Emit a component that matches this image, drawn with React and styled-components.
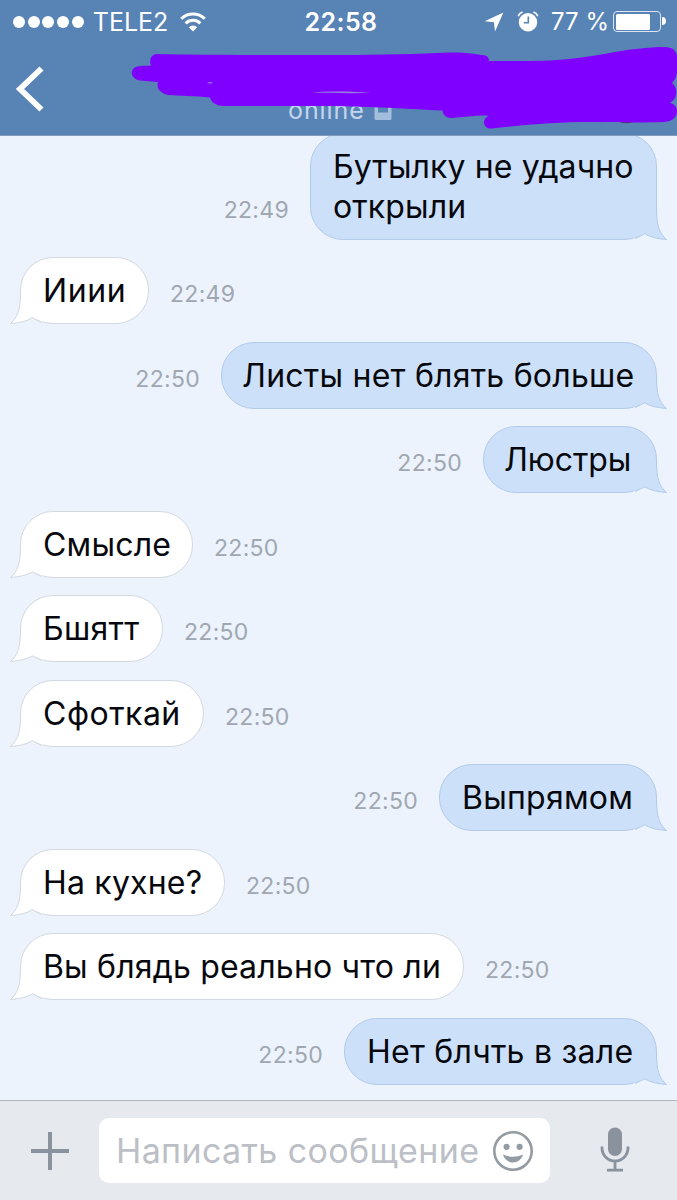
import React from 'react'
import styled, { createGlobalStyle } from 'styled-components';

const messages = [
  { id: 1, out: true, text: ['Бутылку не удачно', 'открыли'], time: '22:49', width: 347, spacing: 0.12 },
  { id: 2, out: false, text: ['Ииии'], time: '22:49', width: 129, spacing: 0.6 },
  { id: 3, out: true, text: ['Листы нет блять больше'], time: '22:50', width: 436, spacing: 0.23, indent: -2 },
  { id: 4, out: true, text: ['Люстры'], time: '22:50', width: 174, spacing: -0.1, indent: -2 },
  { id: 5, out: false, text: ['Смысле'], time: '22:50', width: 173, spacing: 0.2 },
  { id: 6, out: false, text: ['Бшятт'], time: '22:50', width: 143, spacing: 0.25 },
  { id: 7, out: false, text: ['Сфоткай'], time: '22:50', width: 184, spacing: 0.5 },
  { id: 8, out: true, text: ['Выпрямом'], time: '22:50', width: 218, spacing: 0.25 },
  { id: 9, out: false, text: ['На кухне?'], time: '22:50', width: 205, spacing: 0.2 },
  { id: 10, out: false, text: ['Вы блядь реально что ли'], time: '22:50', width: 444, spacing: 0.18 },
  { id: 11, out: true, text: ['Нет блчть в зале'], time: '22:50', width: 313, spacing: 0.25 },
]

function StatusBar() {
  return (
    <Status>
      <Carrier>
        <Dots>
          <i /><i /><i /><i /><i />
        </Dots>
        <span>TELE2</span>
        <svg width="26" height="20" viewBox="0 0 26 20" fill="none" stroke="#fff" strokeWidth="3">
          <path d="M1.2 6.8a16.7 16.7 0 0 1 23.6 0" />
          <path d="M5.6 11.4a10.5 10.5 0 0 1 14.8 0" />
          <path d="M13 19.6l-4.2-4.4a6 6 0 0 1 8.4 0z" fill="#fff" stroke="none" />
        </svg>
      </Carrier>
      <Clock>22:58</Clock>
      <Power>
        <svg width="20" height="20" viewBox="0 0 20 20">
          <path d="M19.4.4L11 19.6l-1-9.4L.6 9.2z" fill="#fff" />
        </svg>
        <Alarm width="22" height="21" viewBox="0 0 22 21">
          <circle cx="11" cy="11.3" r="9.2" fill="#fff" />
          <path d="M1.2 5.2A7 7 0 0 1 5.6 1M20.8 5.2A7 7 0 0 0 16.4 1" stroke="#fff" strokeWidth="1.8" fill="none" />
          <path d="M11.3 5.4v6.4H6.8" stroke="#5783b5" strokeWidth="1.6" fill="none" />
        </Alarm>
        <span>77 %</span>
        <Battery><Charge /></Battery>
      </Power>
    </Status>
  )
}

function Header() {
  return (
    <Top>
      <StatusBar />
      <NavBar>
        <svg width="30" height="46" viewBox="0 0 30 46">
          <path d="M26.500 2.500L5 23l21.500 20.500" fill="none" stroke="#fff" strokeWidth="5.800" />
        </svg>
        <Online>
          <span>online</span>
          <svg width="18" height="26" viewBox="0 0 18 26">
            <path fillRule="evenodd" d="M2 0h14a1.500 1.500 0 0 1 1.500 1.500v23a1.500 1.500 0 0 1-1.500 1.500H2A1.500 1.500 0 0 1 .5 24.500v-23A1.500 1.500 0 0 1 2 0zM4 3v15.500h10V3z" fill="#a3bedd" />
          </svg>
        </Online>
      </NavBar>
      <Scribble width="677" height="135" viewBox="0 0 677 135">
        <path d="M616 121q13 5 24-1z" fill="#4b3a54" />
        <path
          fill="#7f00ff"
          d="M156 54C200 55 260 55 337 55C380 55 420 54 448 52.500C466 52 474 54 482 55C487 55.500 489 57 489 61L530 61C560 61 580 58 604 54C630 49 650 47 664 47C673 47 677 51 677 57V70C677 76 675 80 672 83C676 86 677 91 676 95C675 99 673 101 670 102.500C674 104 677 107 677 111C677 118 671 122 663 122C640 123 610 122 590 122C560 122 520 125 492 128.500C487 129 484 126 484 122C484 119 486 117 489 115.500C475 115 465 117 452 118C446 118 443 115 442.500 110.500C410 109 380 107 337 106H222C215 105 211 102 210 97.500C195 96 180 96 168 95C160 93 156 88 158 82L140 80.500C131 79 129 70 136 67C141 65 146 66 151 65.500C149 60 151 55 156 54Z"
        />
        <path d="M312 92.500C330 90.800 350 91.500 371 92.800C350 93.600 330 92.800 312 92.500ZM207 83q3-1.800 6 0q-3 .8-6 0z" fill="#9a7fe0" />
      </Scribble>
    </Top>
  )
}

function Tail({ out }) {
  return (
    <TailSvg $out={out} width="36" height="36" viewBox="0 0 36 36">
      <path d="M11.500 3C11.500 20 9 28 1.500 34.500C10 33.800 17 32.500 23.500 28.800L34 33V3z" fill={out ? '#cde0f9' : '#fff'} />
      <path d="M11.500 3C11.500 20 9 28 1.500 34.500C10 33.800 17 32.500 23.500 28.800Q28 31.500 33 33.500" fill="none" stroke={out ? '#b3cbea' : '#d4d8df'} strokeWidth="1" />
    </TailSvg>
  )
}

function Message({ item }) {
  return (
    <Row $out={item.out}>
      <Bubble $out={item.out} $width={item.width}>
        <Tail out={item.out} />
        {item.text.map(line => <Line key={line} $spacing={item.spacing} $indent={item.indent || 0}>{line}</Line>)}
      </Bubble>
      <Time>{item.time}</Time>
    </Row>
  )
}

function Composer() {
  return (
    <Bar>
      <Plus width="38" height="38" viewBox="0 0 38 38">
        <path d="M19 0v38M0 19h38" stroke="#89929d" strokeWidth="4" />
      </Plus>
      <Field>
        <Placeholder>Написать сообщение</Placeholder>
        <svg width="40" height="40" viewBox="0 0 40 40">
          <circle cx="20" cy="20" r="18.700" fill="none" stroke="#949ba3" strokeWidth="2.600" />
          <circle cx="13.600" cy="15.800" r="3.100" fill="#949ba3" />
          <circle cx="26.600" cy="15.800" r="3.100" fill="#949ba3" />
          <path d="M9.800 23.600Q20 28 30.200 23.600C28 29.500 24 31.500 20 31.500S12 29.500 9.800 23.600z" fill="#949ba3" />
        </svg>
      </Field>
      <Mic width="30" height="46" viewBox="0 0 30 46">
        <rect x="8" y="0.500" width="14" height="28.500" rx="7" fill="#89929d" />
        <path d="M2 19.500v1.500a13 13 0 0 0 26 0v-1.500M15 34v9M7 43.200h16" fill="none" stroke="#89929d" strokeWidth="2.800" />
      </Mic>
    </Bar>
  )
}

function App() {
  return (
    <Phone>
      <GlobalStyle />
      <Header />
      <Chat>
        {messages.map(item => <Message key={item.id} item={item} />)}
      </Chat>
      <Composer />
    </Phone>
  )
}

export default App


const GlobalStyle = createGlobalStyle`
  *{
    box-sizing:border-box;
  }
  body{
    margin:0;
    font-family:Inter, "Liberation Sans", sans-serif;
  }
  svg{
    display:block;
    flex-shrink:0;
  }
`
const Phone = styled.div`
  width:677px;
  height:1200px;
  display:flex;
  flex-direction:column;
  overflow:hidden;
  background-color:#ecf3fc;
`
const Top = styled.header`
  position:relative;
  z-index:1;
  height:136px;
  flex-shrink:0;
  background-color:#5783b5;
  border-bottom:1px solid #7f9cc0;
  color:#fff;
`
const Status = styled.div`
  height:43px;
  display:grid;
  grid-template-columns:1fr 80px 1fr;
  align-items:center;
  padding:0 11px 0 13px;
  font-size:24px;
  white-space:nowrap;
`
const Carrier = styled.div`
  display:flex;
  align-items:center;
  span{
    margin:0 12px 0 9px;
    width:75px;
    font-size:25px;
  }
`
const Dots = styled.div`
  display:flex;
  gap:2.700px;
  i{
    width:12px;
    height:12px;
    border-radius:50%;
    background-color:#fff;
  }
`
const Clock = styled.div`
  padding-left:3px;
  font-size:25px;
  font-weight:600;
  letter-spacing:0.400px;
  text-align:center;
`
const Power = styled.div`
  display:flex;
  align-items:center;
  justify-content:flex-end;
  span{
    width:55px;
    margin:0 7px 0 12px;
  }
`
const Alarm = styled.svg`
  margin-left:13px;
`
const Battery = styled.div`
  position:relative;
  width:48px;
  height:21px;
  margin-right:5px;
  padding:1.500px;
  border:1.500px solid #dbe6f2;
  border-radius:4px;
  &::after{
    content:'';
    position:absolute;
    right:-6px;
    top:5px;
    width:4px;
    height:8px;
    border-radius:0 4px 4px 0;
    background-color:#fff;
  }
`
const Charge = styled.div`
  width:80%;
  height:100%;
  border-radius:1.500px;
  background-color:#fff;
`
const NavBar = styled.div`
  height:92px;
  display:flex;
  align-items:center;
  padding-left:15px;
`
const Online = styled.div`
  display:flex;
  align-items:center;
  gap:9px;
  margin:41px 0 0 243px;
  font-size:25px;
  line-height:30px;
  letter-spacing:0.900px;
  color:#c1d6ee;
  svg{
    margin-top:-5px;
  }
`
const Scribble = styled.svg`
  position:absolute;
  left:0;
  top:0;
`
const Chat = styled.main`
  flex:1;
  min-height:0;
  display:flex;
  flex-direction:column;
  justify-content:flex-end;
  gap:17.550px;
  padding:0 20px 15px;
`
const Row = styled.div`
  display:flex;
  flex-direction:${props => props.$out ? 'row-reverse' : 'row'};
  align-items:flex-end;
  gap:21px;
`
const Bubble = styled.div`
  position:relative;
  flex-shrink:0;
  width:${props => props.$width}px;
  padding:13px 22px 12px;
  border:1px solid ${props => props.$out ? '#b3cbea' : '#d4d8df'};
  border-radius:33px;
  background-color:${props => props.$out ? '#cde0f9' : '#fff'};
`
const Line = styled.div`
  position:relative;
  font-size:32px;
  line-height:40px;
  letter-spacing:${props => props.$spacing}px;
  text-indent:${props => props.$indent}px;
  white-space:nowrap;
  color:#06080d;
`
const TailSvg = styled.svg`
  position:absolute;
  bottom:-2px;
  ${props => props.$out ? 'right:-12px; transform:scaleX(-1);' : 'left:-12px;'}
`
const Time = styled.div`
  padding-bottom:15px;
  font-size:23px;
  line-height:30px;
  letter-spacing:0.300px;
  color:#a0a7b1;
`
const Bar = styled.footer`
  height:100px;
  flex-shrink:0;
  display:flex;
  align-items:center;
  padding:0 47px 0 30.500px;
  background-color:#e6e9ee;
  border-top:1.500px solid #b1b7bf;
`
const Plus = styled.svg`
  margin-right:30.500px;
`
const Field = styled.div`
  width:451px;
  height:65px;
  display:flex;
  align-items:center;
  justify-content:space-between;
  padding:0 17px;
  border-radius:10px;
  background-color:#fff;
`
const Placeholder = styled.span`
  font-size:34px;
  letter-spacing:0.380px;
  color:#bcbfc6;
  white-space:nowrap;
`
const Mic = styled.svg`
  margin:-2px 0 0 auto;
`
